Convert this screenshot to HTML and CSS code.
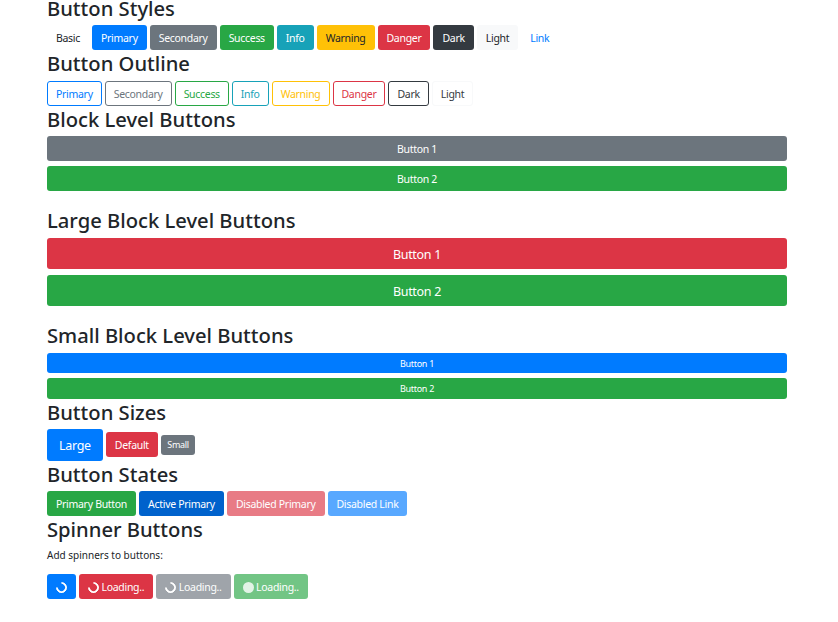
FILE: index.html
```html
<!DOCTYPE html>
<html lang="en">
<head>
<meta charset="utf-8">
<title>Buttons</title>
<link rel="stylesheet" href="styles.css">
</head>
<body>
<main class="page">
  <h2 class="title first">Button Styles</h2>
  <div class="row">
    <a class="btn basic">Basic</a><a class="btn primary">Primary</a><a class="btn secondary">Secondary</a><a class="btn success">Success</a><a class="btn info">Info</a><a class="btn warning">Warning</a><a class="btn danger">Danger</a><a class="btn dark">Dark</a><a class="btn light">Light</a><a class="btn link">Link</a>
  </div>
  <h2 class="title">Button Outline</h2>
  <div class="row outline-row">
    <a class="btn o-primary">Primary</a><a class="btn o-secondary">Secondary</a><a class="btn o-success">Success</a><a class="btn o-info">Info</a><a class="btn o-warning">Warning</a><a class="btn o-danger">Danger</a><a class="btn o-dark">Dark</a><a class="btn o-light">Light</a>
  </div>
  <h2 class="title">Block Level Buttons</h2>
  <div class="stack">
    <a class="btn block secondary">Button 1</a>
    <a class="btn block success">Button 2</a>
  </div>
  <h2 class="title spaced">Large Block Level Buttons</h2>
  <div class="stack wide">
    <a class="btn block lg danger">Button 1</a>
    <a class="btn block lg success">Button 2</a>
  </div>
  <h2 class="title spaced">Small Block Level Buttons</h2>
  <div class="stack narrow">
    <a class="btn block sm primary">Button 1</a>
    <a class="btn block sm success">Button 2</a>
  </div>
  <h2 class="title">Button Sizes</h2>
  <div class="row center">
    <a class="btn size-lg primary">Large</a><a class="btn danger">Default</a><a class="btn size-sm secondary">Small</a>
  </div>
  <h2 class="title">Button States</h2>
  <div class="row">
    <a class="btn success">Primary Button</a><a class="btn active">Active Primary</a><a class="btn danger off">Disabled Primary</a><a class="btn primary off">Disabled Link</a>
  </div>
  <h2 class="title">Spinner Buttons</h2>
  <p class="note">Add spinners to buttons:</p>
  <div class="row">
    <a class="btn primary"><span class="spin alone"></span></a><a class="btn danger"><span class="spin"></span>Loading..</a><a class="btn secondary off"><span class="spin"></span>Loading..</a><a class="btn success off"><span class="grow"></span>Loading..</a>
  </div>
</main>
</body>
</html>
```
FILE: styles.css
```css
* { box-sizing: border-box; }
html, body { margin: 0; background: #fff; }
body {
  font-family: "Noto Sans", "Open Sans", "Liberation Sans", sans-serif;
  color: #212529;
  font-size: 11px;
  overflow: hidden;
}
.page { width: 740px; margin: -5.5px 0 0 47px; }
.title {
  margin: 0 0 4.5px;
  padding-top: 1px;
  font-size: 20.2px;
  line-height: 25px;
  font-weight: 500;
}
.title.spaced { margin: 16px 0 5px; }
.row { display: flex; gap: 3px; }
.row.center { align-items: center; height: 31.5px; margin-top: -.5px; }
.outline-row { padding-top: .5px; margin-bottom: -.5px; }
.stack { display: flex; flex-direction: column; gap: 5px; }
.stack.wide { gap: 6px; }
.stack.narrow { margin: -.25px 0 .25px; }
.btn {
  display: flex;
  align-items: center;
  justify-content: center;
  height: 25px;
  padding: 0 8px;
  border: 1px solid transparent;
  border-radius: 3px;
  font-size: 10.5px;
  letter-spacing: -0.3px;
  white-space: nowrap;
  color: #fff;
}
.block { width: 100%; }
.lg { height: 31px; padding-top: 1px; font-size: 12.5px; }
.sm { height: 20.5px; font-size: 9px; }
.size-lg { height: 32px; font-size: 12.5px; padding: 1px 11px 0; }
.size-sm { height: 20px; font-size: 9px; padding: 0 5.5px; }
.basic { color: #212529; }
.link { color: #007bff; }
.primary { background: #007bff; }
.secondary { background: #6c757d; }
.success { background: #28a745; }
.info { background: #17a2b8; }
.warning { background: #ffc107; color: #212529; }
.danger { background: #dc3545; }
.dark { background: #343a40; }
.light { background: #f8f9fa; color: #212529; }
.active { background: #0062cc; }
.off { opacity: .65; }
.o-primary { border-color: #007bff; color: #007bff; }
.o-secondary { border-color: #6c757d; color: #6c757d; }
.o-success { border-color: #28a745; color: #28a745; }
.o-info { border-color: #17a2b8; color: #17a2b8; }
.o-warning { border-color: #ffc107; color: #ffc107; }
.o-danger { border-color: #dc3545; color: #dc3545; }
.o-dark { border-color: #343a40; color: #343a40; }
.o-light { border-color: #f8f9fa; color: #343a40; }
.note { margin: 5.5px 0 11.5px; font-size: 10px; line-height: 15px; }
.spin {
  flex: none;
  width: 11px;
  height: 11px;
  margin: 2px 2.5px 0 0;
  border: 2px solid currentColor;
  border-right-color: transparent;
  border-radius: 50%;
  transform: rotate(-135deg);
}
.spin.alone { margin-right: 0; }
.grow {
  flex: none;
  width: 11px;
  height: 11px;
  margin: 2px 2.5px 0 0;
  border-radius: 50%;
  background: currentColor;
  opacity: .8;
}
```
